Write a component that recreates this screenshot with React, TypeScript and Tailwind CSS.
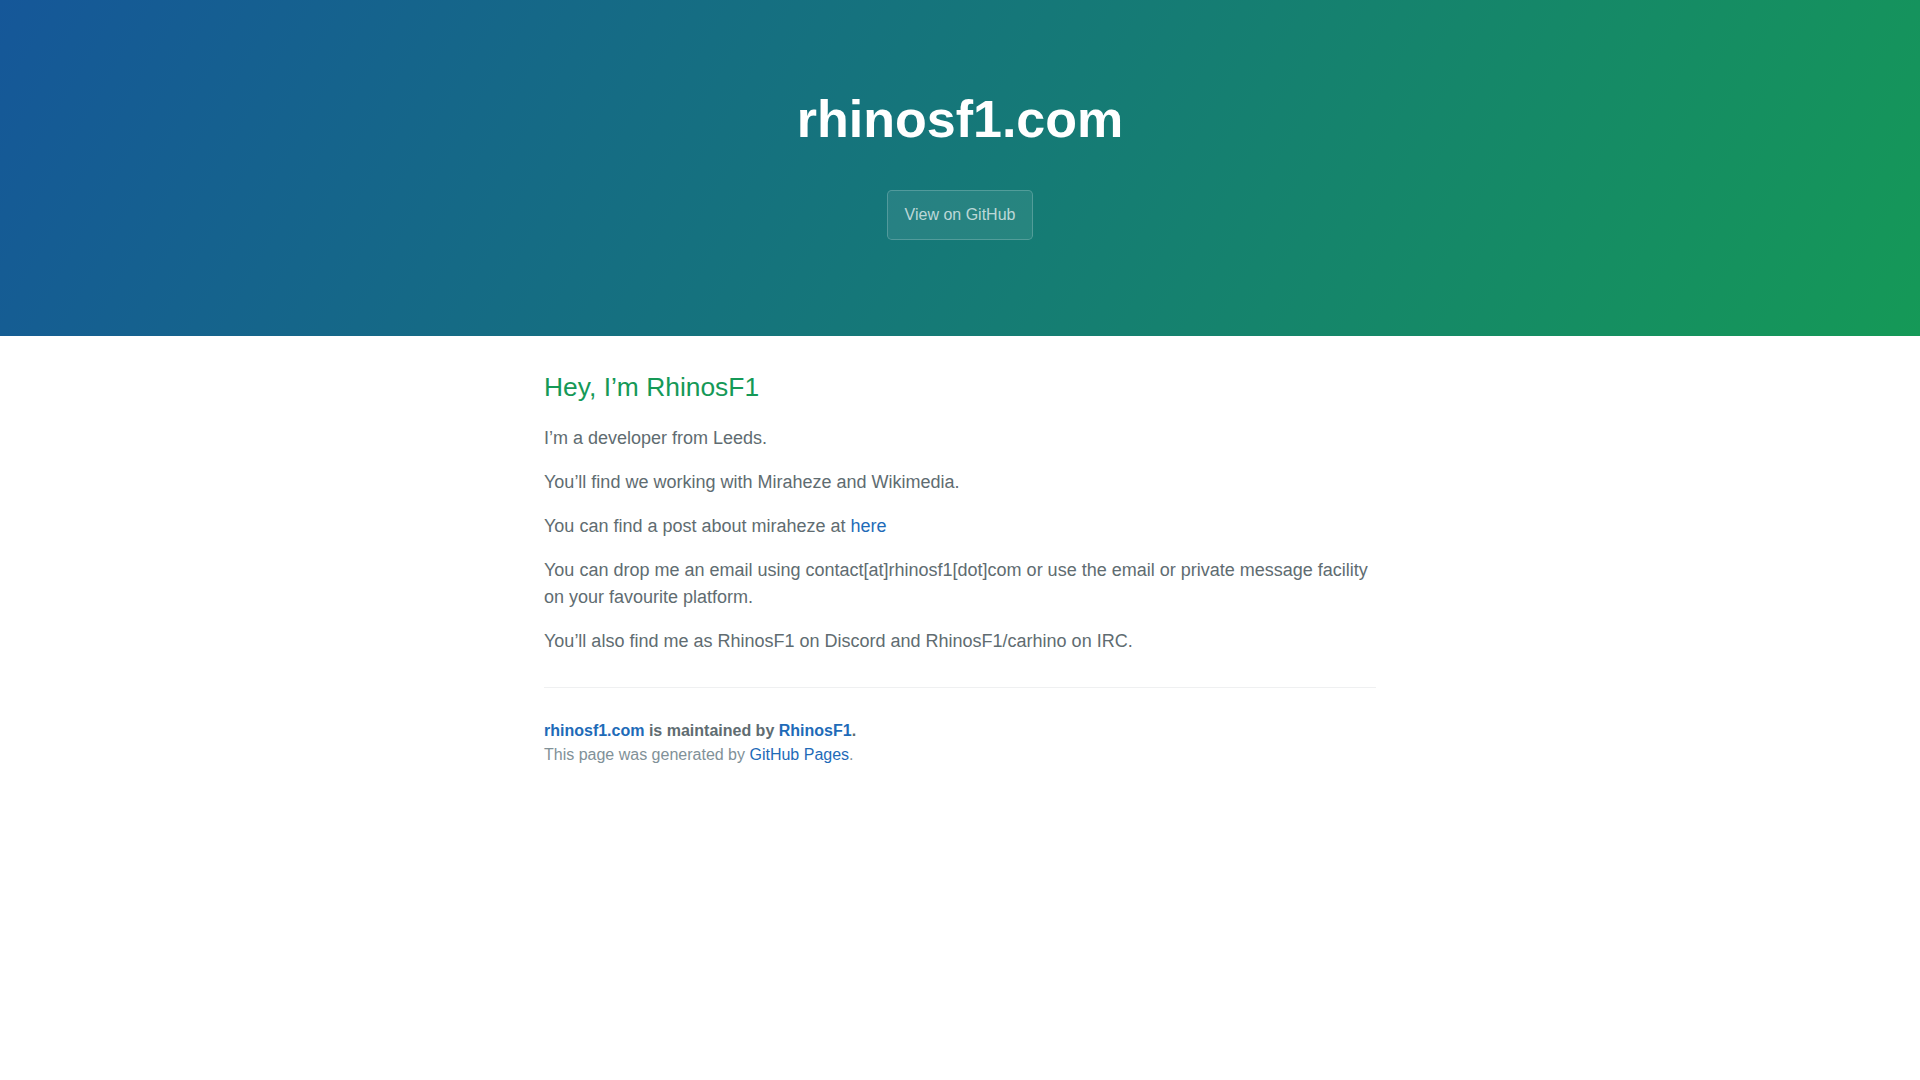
export default function App() {
  return (
    <div className="min-h-screen w-full bg-white font-['Liberation_Sans',Arial,sans-serif] text-[16px] leading-[1.5] text-[#606c71]">
      {/* Page header */}
      <section className="bg-[#159957] bg-[linear-gradient(120deg,#155799,#159957)] px-24 pt-20 pb-20 text-center text-white">
        <h1 className="mb-8 text-[52px] font-bold leading-[1.5]">rhinosf1.com</h1>
        <a
          href="#"
          className="mb-4 inline-block rounded-[4.8px] border border-white/20 bg-white/[0.08] px-[17px] py-3 text-[16px] leading-6 text-white/70"
        >
          View on GitHub
        </a>
      </section>

      {/* Main content */}
      <section className="mx-auto max-w-[1024px] px-24 pt-8 pb-8 text-[18px] leading-[27px]">
        <h2 className="mb-[17px] text-[26.4px] font-normal leading-[1.5] text-[#159957]">Hey, I’m RhinosF1</h2>
        <p className="mb-[17px]">I’m a developer from Leeds.</p>
        <p className="mb-[17px]">You’ll find we working with Miraheze and Wikimedia.</p>
        <p className="mb-[17px]">
          You can find a post about miraheze at{" "}
          <a href="#" className="text-[#1e6bb8]">
            here
          </a>
        </p>
        <p className="mb-[17px]">
          You can drop me an email using contact[at]rhinosf1[dot]com or use the email or private message facility on
          your favourite platform.
        </p>
        <p>You’ll also find me as RhinosF1 on Discord and RhinosF1/carhino on IRC.</p>

        <footer className="mt-8 border-t border-[#eff0f1] pt-[31px] text-[16px] leading-6">
          <span className="block font-bold">
            <a href="#" className="text-[#1e6bb8]">
              rhinosf1.com
            </a>{" "}
            is maintained by{" "}
            <a href="#" className="text-[#1e6bb8]">
              RhinosF1
            </a>
            .
          </span>
          <span className="block text-[#819198]">
            This page was generated by{" "}
            <a href="#" className="text-[#1e6bb8]">
              GitHub Pages
            </a>
            .
          </span>
        </footer>
      </section>
    </div>
  );
}
